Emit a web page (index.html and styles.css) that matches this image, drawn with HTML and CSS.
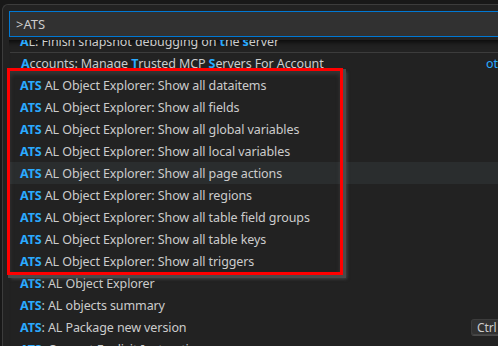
FILE: index.html
```html
<!DOCTYPE html>
<html lang="en">
<head>
  <meta charset="UTF-8">
  <title>Command Palette</title>
  <link rel="stylesheet" href="styles.css">
</head>
<body>

  <div class="widget">
    <div class="entrada">&gt;ATS</div>

    <div class="lista">
      <div class="filas">
        <div class="fila"><span class="texto"><b>A</b>L: Finish snapshot debugging on <b>t</b>he <b>s</b>erver</span></div>
        <div class="fila separador"><span class="texto"><b>A</b>ccounts: Manage <b>T</b>rusted MCP <b>S</b>ervers For Account</span><span class="grupo">other commands</span></div>
        <div class="fila"><span class="texto"><b>ATS</b> AL Object Explorer: Show all dataitems</span></div>
        <div class="fila"><span class="texto"><b>ATS</b> AL Object Explorer: Show all fields</span></div>
        <div class="fila"><span class="texto"><b>ATS</b> AL Object Explorer: Show all global variables</span></div>
        <div class="fila"><span class="texto"><b>ATS</b> AL Object Explorer: Show all local variables</span></div>
        <div class="fila activa"><span class="texto"><b>ATS</b> AL Object Explorer: Show all page actions</span></div>
        <div class="fila"><span class="texto"><b>ATS</b> AL Object Explorer: Show all regions</span></div>
        <div class="fila"><span class="texto"><b>ATS</b> AL Object Explorer: Show all table field groups</span></div>
        <div class="fila"><span class="texto"><b>ATS</b> AL Object Explorer: Show all table keys</span></div>
        <div class="fila"><span class="texto"><b>ATS</b> AL Object Explorer: Show all triggers</span></div>
        <div class="fila"><span class="texto"><b>ATS</b>: AL Object Explorer</span></div>
        <div class="fila"><span class="texto"><b>ATS</b>: AL objects summary</span></div>
        <div class="fila"><span class="texto"><b>ATS</b>: AL Package new version</span><span class="teclas"><kbd>Ctrl</kbd><kbd>Shift</kbd></span></div>
        <div class="fila"><span class="texto"><b>ATS</b>: Convert Explicit Instructions</span></div>
      </div>
    </div>
  </div>

  <div class="marco"></div>

</body>
</html>
```

FILE: styles.css
```css
body {
  margin: 0;
  width: 498px;
  height: 346px;
  overflow: hidden;
  position: relative;
  background: #181818;
  font-family: 'Noto Sans', sans-serif;
  font-size: 13px;
  color: #cccccc;
}

.widget {
  margin: 4px 0 0 2px;
  width: 600px;
  height: 360px;
  padding: 6px 0 0 6px;
  background: #222222;
  border-top: 1px solid #3c3c3c;
  border-left: 1px solid #3c3c3c;
  border-radius: 6px 0 0 0;
}

.entrada {
  height: 26px;
  line-height: 24px;
  box-sizing: border-box;
  padding-left: 6px;
  background: #313131;
  border: 1px solid #0078d4;
  border-right: none;
  color: #cccccc;
}

.lista {
  margin-top: 3px;
  width: 580px;
  height: 320px;
  overflow: hidden;
  position: relative;
  box-shadow: inset 0 7px 6px -6px #000000;
}

.filas {
  margin-top: -10px;
}

.fila {
  display: flex;
  align-items: center;
  height: 22px;
  box-sizing: border-box;
  padding: 0 11px;
  white-space: nowrap;
  font-size: 12.5px;
  letter-spacing: -0.1px;
}

.fila b {
  color: #2aaaff;
  font-weight: bold;
}

.texto {
  flex: 1;
}

.separador {
  border-top: 1px solid #3c3c3c;
  margin-left: 1px;
}

.activa {
  background: #2a2d2e;
}

.grupo {
  width: 92px;
  color: #2aaaff;
}

.teclas {
  width: 107px;
  display: flex;
  gap: 3px;
}

kbd {
  font-family: inherit;
  font-size: 12px;
  line-height: 15px;
  padding: 0 5px;
  background: #313131;
  border: 1px solid #3c3c3c;
  border-bottom-color: #4a4a4a;
  border-radius: 3px;
  box-shadow: inset 0 -1px 0 #444444;
}

.marco {
  position: absolute;
  left: 7px;
  top: 68px;
  width: 336px;
  height: 207px;
  box-sizing: border-box;
  border: 3px solid #ff0000;
  box-shadow: 2px 2px 0 1px #4a4a4a, 4px 4px 3px rgba(90, 90, 90, 0.6), inset 0 3px 4px rgba(120, 120, 120, 0.25);
}
```
